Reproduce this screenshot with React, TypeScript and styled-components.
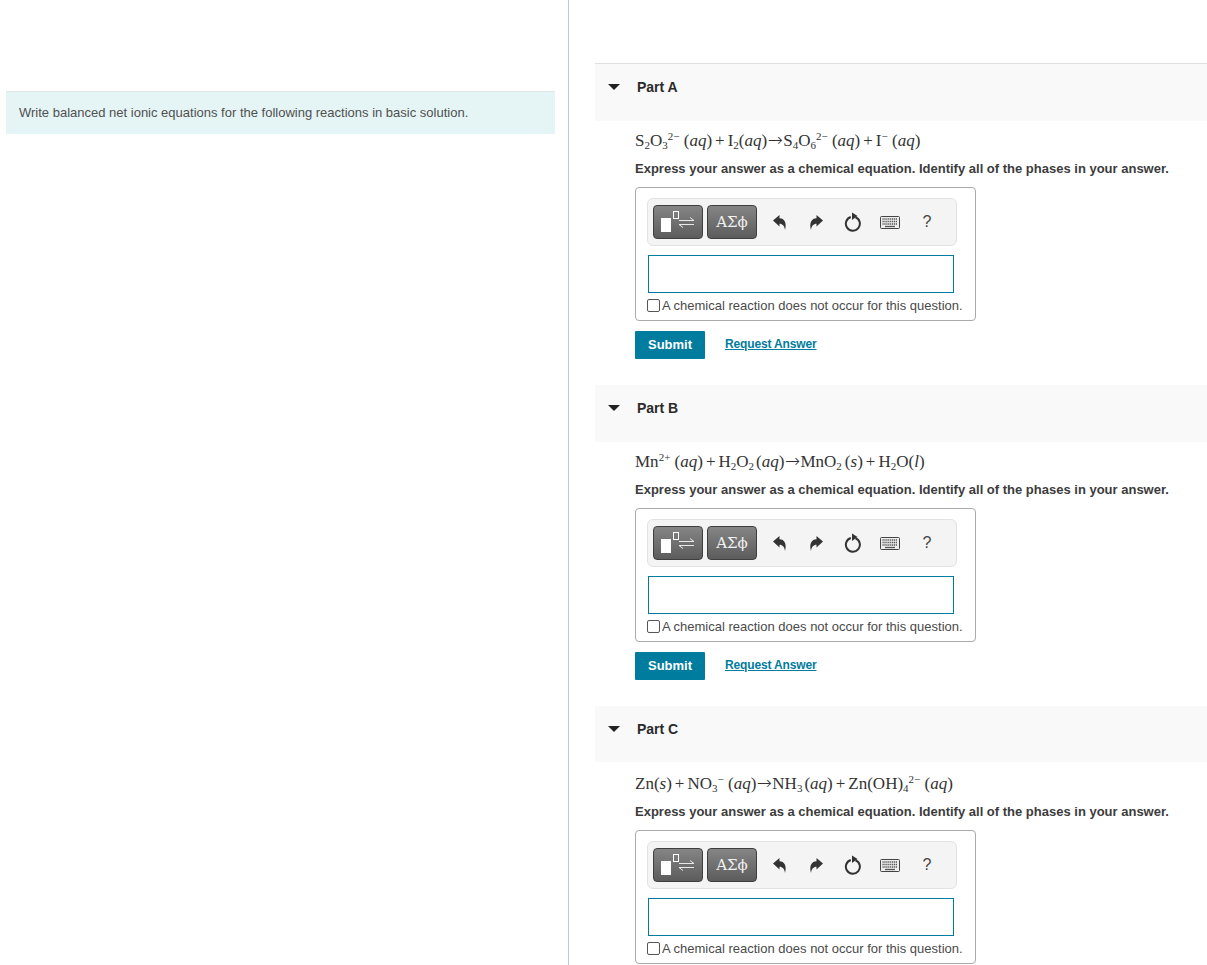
import React from "react";
import styled, { createGlobalStyle } from "styled-components";

const Global = createGlobalStyle`
  html, body { margin: 0; padding: 0; background: #fff; height: 965px; overflow: hidden; }
  body { font-family: "Liberation Sans", Arial, sans-serif; color: #333; }
`;

const Page = styled.div`
  display: flex;
  width: 1207px;
  height: 965px;
  overflow: hidden;
`;
const LeftColumn = styled.aside`
  box-sizing: border-box;
  width: 569px;
  flex: none;
  height: 965px;
  padding: 91px 13px 0 6px;
  border-right: 1px solid #bccdd8;
`;
const Intro = styled.div`
  box-sizing: border-box;
  height: 43px;
  padding: 12px 13px 0;
  background: #e5f5f6;
  border-top: 1px solid #dfe4e5;
  font-size: 13px;
  line-height: 17px;
  color: #505050;
`;
const RightColumn = styled.main`
  flex: 1;
  padding: 63px 0 0 26px;
  min-width: 0;
`;
const PartBlock = styled.section`
  margin-bottom: 26px;
`;
const PartHeader = styled.div<{ $height: number; $rule?: boolean }>`
  box-sizing: border-box;
  height: ${(p) => p.$height}px;
  display: flex;
  align-items: flex-start;
  gap: 17px;
  padding: 15px 0 0 13px;
  background: #f9f9f9;
  border-top: ${(p) => (p.$rule ? "1px solid #e0e0e0" : "0")};
`;
const Caret = styled.span`
  width: 0;
  height: 0;
  margin-top: 5px;
  border-left: 6px solid transparent;
  border-right: 6px solid transparent;
  border-top: 6px solid #222;
`;
const PartTitle = styled.h2`
  margin: 0;
  font-size: 14px;
  line-height: 17px;
  font-weight: 700;
  color: #2b2b2b;
`;
const PartBody = styled.div`
  padding-left: 40px;
`;
const Equation = styled.div<{ $top: number }>`
  font-family: "Liberation Serif", "Times New Roman", serif;
  font-size: 17px;
  line-height: 20px;
  height: 20px;
  margin-top: ${(p) => p.$top}px;
  color: #333;
  white-space: nowrap;
`;
const Sub = styled.sub<{ $after?: number }>`
  font-size: 11px;
  line-height: 0;
  vertical-align: -3px;
  margin-right: ${(p) => p.$after ?? 0}px;
`;
const Sup = styled.sup`
  font-size: 11px;
  line-height: 0;
  vertical-align: 6px;
`;
const Var = styled.i`
  font-style: italic;
`;
const Op = styled.span`
  margin: 0 3px;
`;
const Arrow = styled.span`
  display: inline-block;
  width: 16px;
  font-family: "DejaVu Sans", sans-serif;
  font-size: 18px;
  line-height: 0;
  text-align: center;
  font-weight: 300;
`;
const Prompt = styled.p`
  margin: 10px 0 0;
  font-size: 13px;
  line-height: 16px;
  font-weight: 700;
  color: #3c3c3c;
  white-space: nowrap;
`;
const AnswerBox = styled.div`
  box-sizing: border-box;
  width: 341px;
  height: 134px;
  margin-top: 10px;
  padding: 10px 12px 0 11px;
  border: 1px solid #aaa;
  border-radius: 4px;
`;
const Toolbar = styled.div`
  box-sizing: border-box;
  width: 310px;
  height: 48px;
  display: flex;
  align-items: center;
  padding: 0 0 0 5px;
  background: #f4f4f4;
  border: 1px solid #e2e2e2;
  border-radius: 6px;
`;
const DarkButton = styled.div`
  box-sizing: border-box;
  width: 50px;
  height: 34px;
  margin-right: 4px;
  display: flex;
  align-items: center;
  justify-content: center;
  background: linear-gradient(#858585, #5c5c5c);
  border: 1px solid #3f3f3f;
  border-radius: 4px;
  font-family: "DejaVu Serif", serif;
  font-size: 15px;
  color: #f0f0f0;
`;
const ToolIcon = styled.div<{ $w: number }>`
  width: ${(p) => p.$w}px;
  height: 34px;
  flex: none;
  display: flex;
  align-items: center;
  justify-content: center;
  color: #333;
`;
const Help = styled.span`
  font-size: 16px;
  color: #444;
`;
const AnswerInput = styled.div`
  box-sizing: border-box;
  width: 306px;
  height: 38px;
  margin: 9px 0 0 1px;
  border: 1px solid #007c9e;
  background: #fff;
`;
const NoReaction = styled.label`
  display: flex;
  align-items: center;
  gap: 2px;
  height: 16px;
  margin-top: 4px;
  font-size: 13px;
  color: #4a4a4a;
  white-space: nowrap;
`;
const Check = styled.span`
  box-sizing: border-box;
  width: 13px;
  height: 13px;
  flex: none;
  border: 1px solid #555;
  border-radius: 2px;
  margin-top: 1px;
`;
const Actions = styled.div`
  display: flex;
  align-items: flex-start;
  gap: 20px;
  margin-top: 10px;
`;
const Submit = styled.button`
  width: 70px;
  height: 28px;
  padding: 0 0 2px;
  border: 0;
  border-radius: 1px;
  background: #007c9e;
  color: #fff;
  font-family: inherit;
  font-size: 13px;
  font-weight: 700;
`;
const RequestLink = styled.a`
  margin-top: 6px;
  font-size: 12px;
  line-height: 15px;
  font-weight: 700;
  letter-spacing: -0.15px;
  color: #007c9e;
  text-decoration: underline;
`;

const Undo = ({ flip }: { flip?: boolean }) => (
  <svg width="15" height="17" viewBox="0 0 15 17" style={flip ? { transform: "scaleX(-1)" } : undefined}>
    <path d="M1 6.500 L7.500 1 V4.200 C12.500 4.200 15 9 13 16 C12.500 12 10.500 9.800 7.500 9.800 V12.500 Z" fill="#333" />
  </svg>
);
const Reset = () => (
  <svg width="18" height="20" viewBox="0 0 18 20">
    <path d="M6.800 5 A7 7 0 1 0 11.500 5.200" fill="none" stroke="#333" strokeWidth="2" />
    <path d="M8 0.500 L13.500 4 L8 8 Z" fill="#333" />
  </svg>
);
const Keyboard = () => (
  <svg width="20" height="13" viewBox="0 0 20 13">
    <rect x="0.5" y="0.5" width="19" height="12" rx="1" fill="#eee" stroke="#444" />
    <path d="M2.500 3h15M2.500 5.500h15M2.500 8h15" stroke="#555" strokeWidth="1.300" strokeDasharray="1.200 0.700" />
    <path d="M5 10.500h10" stroke="#555" strokeWidth="1.300" />
  </svg>
);
const Templates = () => (
  <svg width="48" height="32" viewBox="0 0 48 32">
    <rect x="7" y="12" width="10" height="14" fill="#fff" />
    <rect x="19.500" y="5.500" width="5" height="7" fill="none" stroke="#fff" />
    <path d="M25 14.500h15l-4-3M40 18.500H25l4 3" fill="none" stroke="#e8e8e8" strokeWidth="1" />
  </svg>
);

const Aq = () => (
  <>
    (<Var>aq</Var>)
  </>
);

const partA = (
  <>
    S<Sub>2</Sub>O<Sub>3</Sub>
    <Sup>2−</Sup> <Aq /><Op>+</Op>I<Sub>2</Sub>
    <Aq /><Arrow>→</Arrow>S<Sub>4</Sub>O<Sub>6</Sub>
    <Sup>2−</Sup> <Aq /><Op>+</Op>I<Sup>−</Sup> <Aq />
  </>
);
const partB = (
  <>
    Mn<Sup>2+</Sup> <Aq /><Op>+</Op>H<Sub>2</Sub>O<Sub $after={2}>2</Sub><Aq /><Arrow>→</Arrow>MnO<Sub $after={3}>2</Sub>(<Var>s</Var>)<Op>+</Op>H<Sub>2</Sub>O(<Var>l</Var>)
  </>
);
const partC = (
  <>
    Zn(<Var>s</Var>)<Op>+</Op>NO<Sub>3</Sub>
    <Sup>−</Sup> <Aq /><Arrow>→</Arrow>NH<Sub $after={2}>3</Sub><Aq /><Op>+</Op>Zn(OH)<Sub>4</Sub>
    <Sup>2−</Sup> <Aq />
  </>
);

const parts = [
  { name: "Part A", eq: partA, height: 58, top: 10, rule: true, actions: true },
  { name: "Part B", eq: partB, height: 57, top: 10, rule: false, actions: true },
  { name: "Part C", eq: partC, height: 56, top: 12, rule: false, actions: false },
];

export default function App() {
  return (
    <Page>
      <Global />
      <LeftColumn>
        <Intro>Write balanced net ionic equations for the following reactions in basic solution.</Intro>
      </LeftColumn>
      <RightColumn>
        {parts.map((part) => (
          <PartBlock key={part.name}>
            <PartHeader $height={part.height} $rule={part.rule}>
              <Caret />
              <PartTitle>{part.name}</PartTitle>
            </PartHeader>
            <PartBody>
              <Equation $top={part.top}>{part.eq}</Equation>
              <Prompt>Express your answer as a chemical equation. Identify all of the phases in your answer.</Prompt>
              <AnswerBox>
                <Toolbar>
                  <DarkButton><Templates /></DarkButton>
                  <DarkButton>ΑΣϕ</DarkButton>
                  <ToolIcon $w={36}><Undo /></ToolIcon>
                  <ToolIcon $w={38}><Undo flip /></ToolIcon>
                  <ToolIcon $w={36}><Reset /></ToolIcon>
                  <ToolIcon $w={38}><Keyboard /></ToolIcon>
                  <ToolIcon $w={36}><Help>?</Help></ToolIcon>
                </Toolbar>
                <AnswerInput />
                <NoReaction><Check />A chemical reaction does not occur for this question.</NoReaction>
              </AnswerBox>
              {part.actions && (
                <Actions>
                  <Submit>Submit</Submit>
                  <RequestLink>Request Answer</RequestLink>
                </Actions>
              )}
            </PartBody>
          </PartBlock>
        ))}
      </RightColumn>
    </Page>
  );
}
